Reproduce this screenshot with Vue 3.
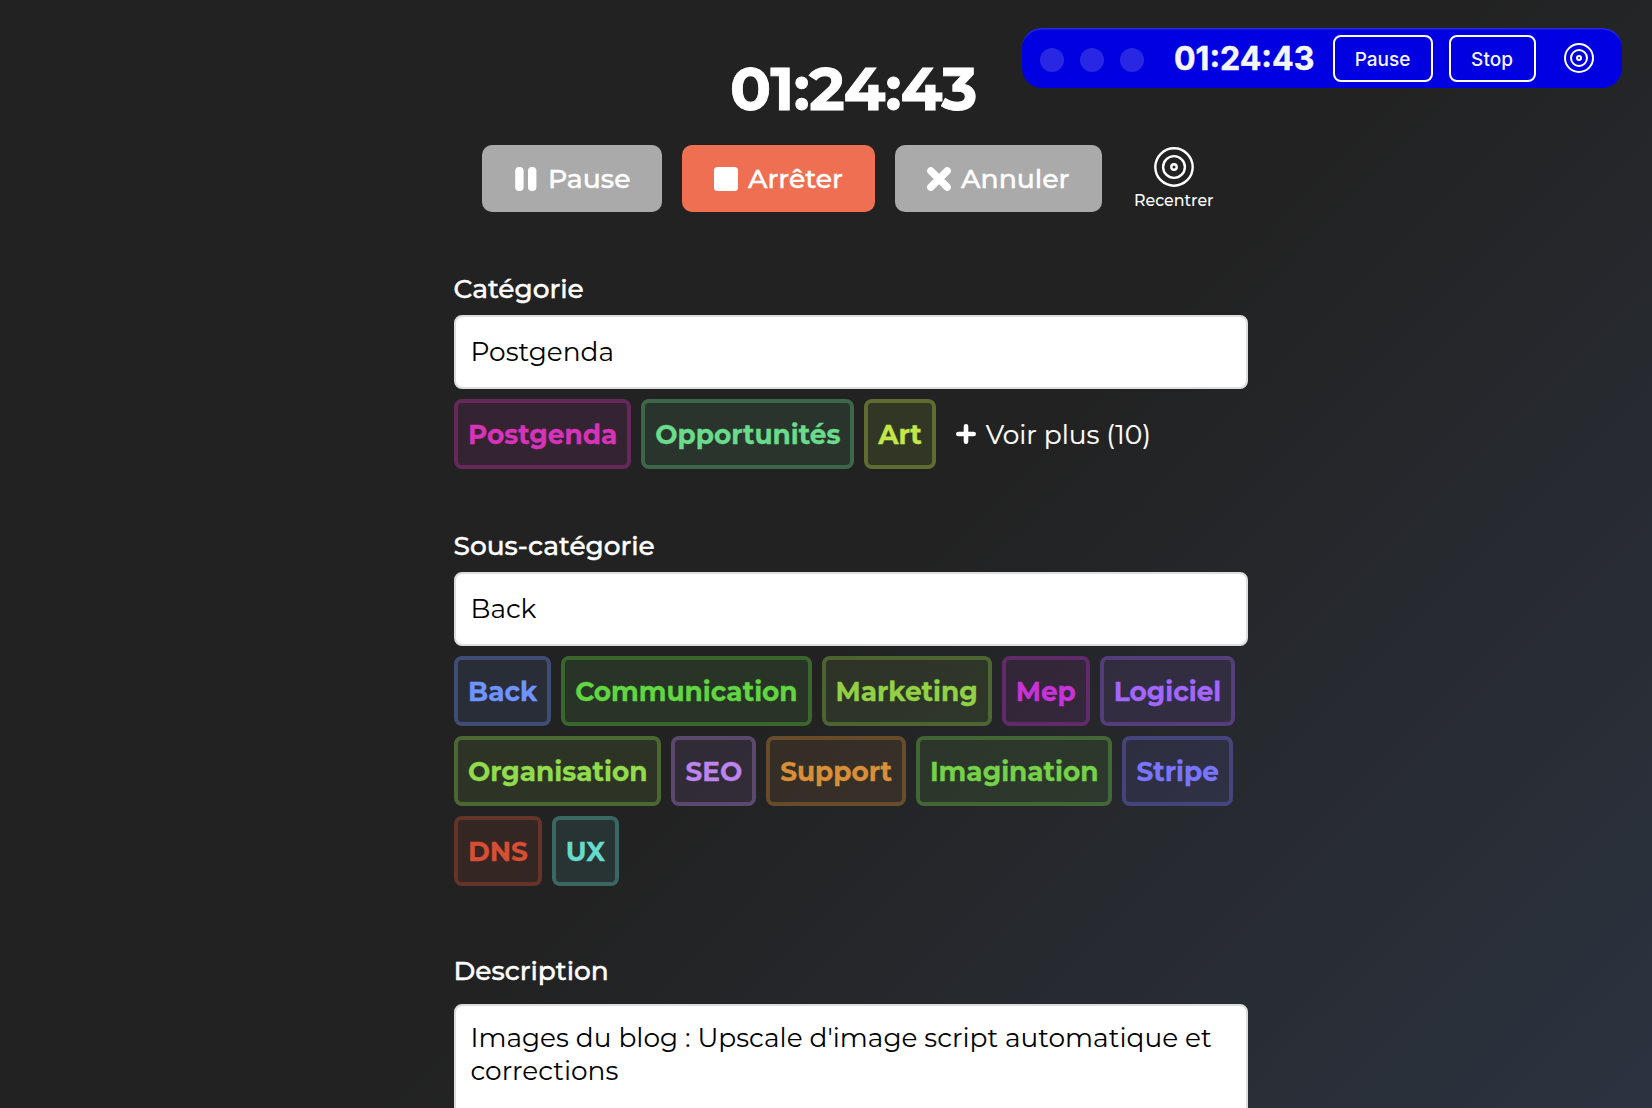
<template>
  <div class="timer-page">
    <main class="tracker">
      <div class="clock">{{ elapsed }}</div>

      <div class="controls">
        <button class="btn btn-pause">
          <svg width="24" height="24" viewBox="0 0 24 24" fill="#fff">
            <rect x="1.2" width="8.4" height="24" rx="4" />
            <rect x="14" width="8.4" height="24" rx="4" />
          </svg>
          <span>Pause</span>
        </button>
        <button class="btn btn-stop">
          <svg width="24" height="24" viewBox="0 0 24 24" fill="#fff">
            <rect width="24" height="24" rx="3.5" />
          </svg>
          <span>Arrêter</span>
        </button>
        <button class="btn btn-cancel">
          <svg width="24" height="24" viewBox="0 0 24 24" stroke="#fff" stroke-width="7.4" stroke-linecap="round">
            <path d="M3.8 3.8 20.2 20.2M20.2 3.8 3.8 20.2" />
          </svg>
          <span>Annuler</span>
        </button>
        <button class="recenter">
          <svg width="40" height="40" viewBox="0 0 40 40" fill="none" stroke="#fff" stroke-width="2.4">
            <circle cx="20" cy="20" r="18.7" />
            <circle cx="20" cy="20" r="10.9" />
            <circle cx="20" cy="20" r="2.7" />
          </svg>
          <span>Recentrer</span>
        </button>
      </div>

      <section class="field">
        <label>Catégorie</label>
        <div class="input">{{ category }}</div>
        <div class="tags">
          <button
            class="tag"
            v-for="tag in categories"
            :key="tag.name"
            :style="tagStyle(tag.color)"
          >
            {{ tag.name }}
          </button>
          <button class="more">
            <svg width="20" height="20" viewBox="0 0 20 20" stroke="#fff" stroke-width="4.6" stroke-linecap="round">
              <path d="M10 2.3V17.7M2.3 10H17.7" />
            </svg>
            <span>Voir plus (10)</span>
          </button>
        </div>
      </section>

      <section class="field">
        <label>Sous-catégorie</label>
        <div class="input">{{ subcategory }}</div>
        <div class="tags">
          <button
            class="tag"
            v-for="tag in subcategories"
            :key="tag.name"
            :style="tagStyle(tag.color)"
          >
            {{ tag.name }}
          </button>
        </div>
      </section>

      <section class="field description">
        <label>Description</label>
        <div class="textarea">{{ description }}</div>
      </section>
    </main>

    <!-- always-on-top mini timer -->
    <aside class="floating">
      <i class="dot" v-for="n in 3" :key="n"></i>
      <span class="floating-clock">{{ elapsed }}</span>
      <button class="mini mini-pause">Pause</button>
      <button class="mini mini-stop">Stop</button>
      <svg class="target" width="30" height="30" viewBox="0 0 30 30" fill="none" stroke="#fff" stroke-width="2">
        <circle cx="15" cy="15" r="14" />
        <circle cx="15" cy="15" r="8" />
        <circle cx="15" cy="15" r="2" />
      </svg>
    </aside>
  </div>
</template>

<script setup>
import { ref } from "vue";

const elapsed = ref("01:24:43");
const category = ref("Postgenda");
const subcategory = ref("Back");
const description = ref(
  "Images du blog : Upscale d'image script automatique et corrections"
);

const categories = ref([
  { name: "Postgenda", color: "#d633b9" },
  { name: "Opportunités", color: "#69db8b" },
  { name: "Art", color: "#c3e749" },
]);

const subcategories = ref([
  { name: "Back", color: "#7094ff" },
  { name: "Communication", color: "#62d642" },
  { name: "Marketing", color: "#92d145" },
  { name: "Mep", color: "#c733d6" },
  { name: "Logiciel", color: "#a366ff" },
  { name: "Organisation", color: "#91dc4c" },
  { name: "SEO", color: "#bd84eb" },
  { name: "Support", color: "#d98f38" },
  { name: "Imagination", color: "#75d147" },
  { name: "Stripe", color: "#7a75ff" },
  { name: "DNS", color: "#d64f33" },
  { name: "UX", color: "#66dbcd" },
]);

function tagStyle(color) {
  return {
    color,
    borderColor: color + "60",
    backgroundColor: color + "1a",
  };
}
</script>

<style>
body {
  margin: 0;
  overflow: hidden;
  background: #222;
}
</style>

<style scoped>
.timer-page {
  position: relative;
  box-sizing: border-box;
  height: 1108px;
  padding-left: 50px;
  overflow: hidden;
  background: linear-gradient(135deg, #222 53%, #2c3340 100%);
  color: #fff;
  font-family: Montserrat, Inter, sans-serif;
  font-size: 26.4px;
}
button {
  font-family: inherit;
  color: inherit;
}
.tracker {
  width: 794px;
  margin: 0 auto;
}
.clock {
  height: 90px;
  padding: 55px 0 0 5px;
  font-size: 60.6px;
  line-height: 67px;
  font-weight: 700;
  letter-spacing: -0.5px;
  text-align: center;
  -webkit-text-stroke: 0.9px #fff;
}
.controls {
  display: flex;
  gap: 20px;
  padding-left: 28px;
}
.btn {
  box-sizing: border-box;
  display: flex;
  align-items: center;
  gap: 10px;
  height: 67px;
  padding: 0 0 0 32px;
  border: 0;
  border-radius: 10px;
  background: #aaa;
  font-size: 26.67px;
  font-weight: 500;
  -webkit-text-stroke: 0.4px #fff;
}
.btn-pause {
  width: 180px;
}
.btn-stop {
  width: 193px;
  background: #ef6f53;
}
.btn-cancel {
  width: 207px;
}
.recenter {
  display: flex;
  flex-direction: column;
  align-items: center;
  gap: 3px;
  margin-left: 12px;
  padding: 2px 0 0;
  border: 0;
  background: none;
  font-size: 15.84px;
  font-weight: 500;
  line-height: 22px;
}
.field {
  margin-top: 57px;
}
.description {
  margin-top: 65px;
}
label {
  display: block;
  height: 46px;
  margin-left: -0.5px;
  line-height: 40px;
  font-weight: 500;
  -webkit-text-stroke: 0.4px #fff;
}
.input,
.textarea {
  box-sizing: border-box;
  padding: 0 14.5px;
  border: 2px solid #ddd;
  border-radius: 8px;
  background: #fff;
  color: #000;
}
.input {
  height: 74px;
  line-height: 70px;
}
.textarea {
  height: 160px;
  margin-top: 7px;
  padding: 15px 14.5px;
  line-height: 33px;
}
.tags {
  display: flex;
  flex-wrap: wrap;
  gap: 10px;
  margin-top: 10px;
}
.tag {
  box-sizing: border-box;
  height: 70px;
  padding: 1px 9.95px 0;
  border: 4px solid;
  border-radius: 8px;
  background-clip: padding-box;
  font-size: 26.4px;
  font-weight: 700;
  white-space: nowrap;
  -webkit-text-stroke: 0.3px currentColor;
}
.more {
  display: flex;
  align-items: center;
  gap: 10px;
  height: 70px;
  margin-left: 10px;
  padding: 0;
  border: 0;
  background: none;
  font-size: 26.4px;
  -webkit-text-stroke: 0.2px #fff;
}
.floating {
  position: absolute;
  top: 28px;
  right: 30px;
  box-sizing: border-box;
  display: flex;
  align-items: center;
  width: 600px;
  height: 60px;
  padding-left: 18px;
  border-radius: 20px;
  background: #0000e0;
  box-shadow: inset 0 2px 0 -0.5px #2929df;
  font-family: Inter, sans-serif;
}
.dot {
  width: 24px;
  height: 24px;
  margin: 4px 16px 0 0;
  border-radius: 50%;
  background: #2727e4;
}
.floating-clock {
  width: 159px;
  margin: 1px 0 0 14px;
  color: #f5f5f7;
  font-size: 32px;
  font-weight: 700;
  -webkit-text-stroke: 0.5px #f5f5f7;
}
.mini {
  box-sizing: border-box;
  height: 47px;
  margin-right: 16px;
  padding: 2px 1px 0 0;
  border: 2px solid #fff;
  border-radius: 8px;
  background: none;
  color: #f5f5f7;
  font-size: 19px;
  font-weight: 500;
}
.mini-pause {
  width: 100px;
}
.mini-stop {
  width: 87px;
}
.target {
  margin-left: 12px;
}
</style>
